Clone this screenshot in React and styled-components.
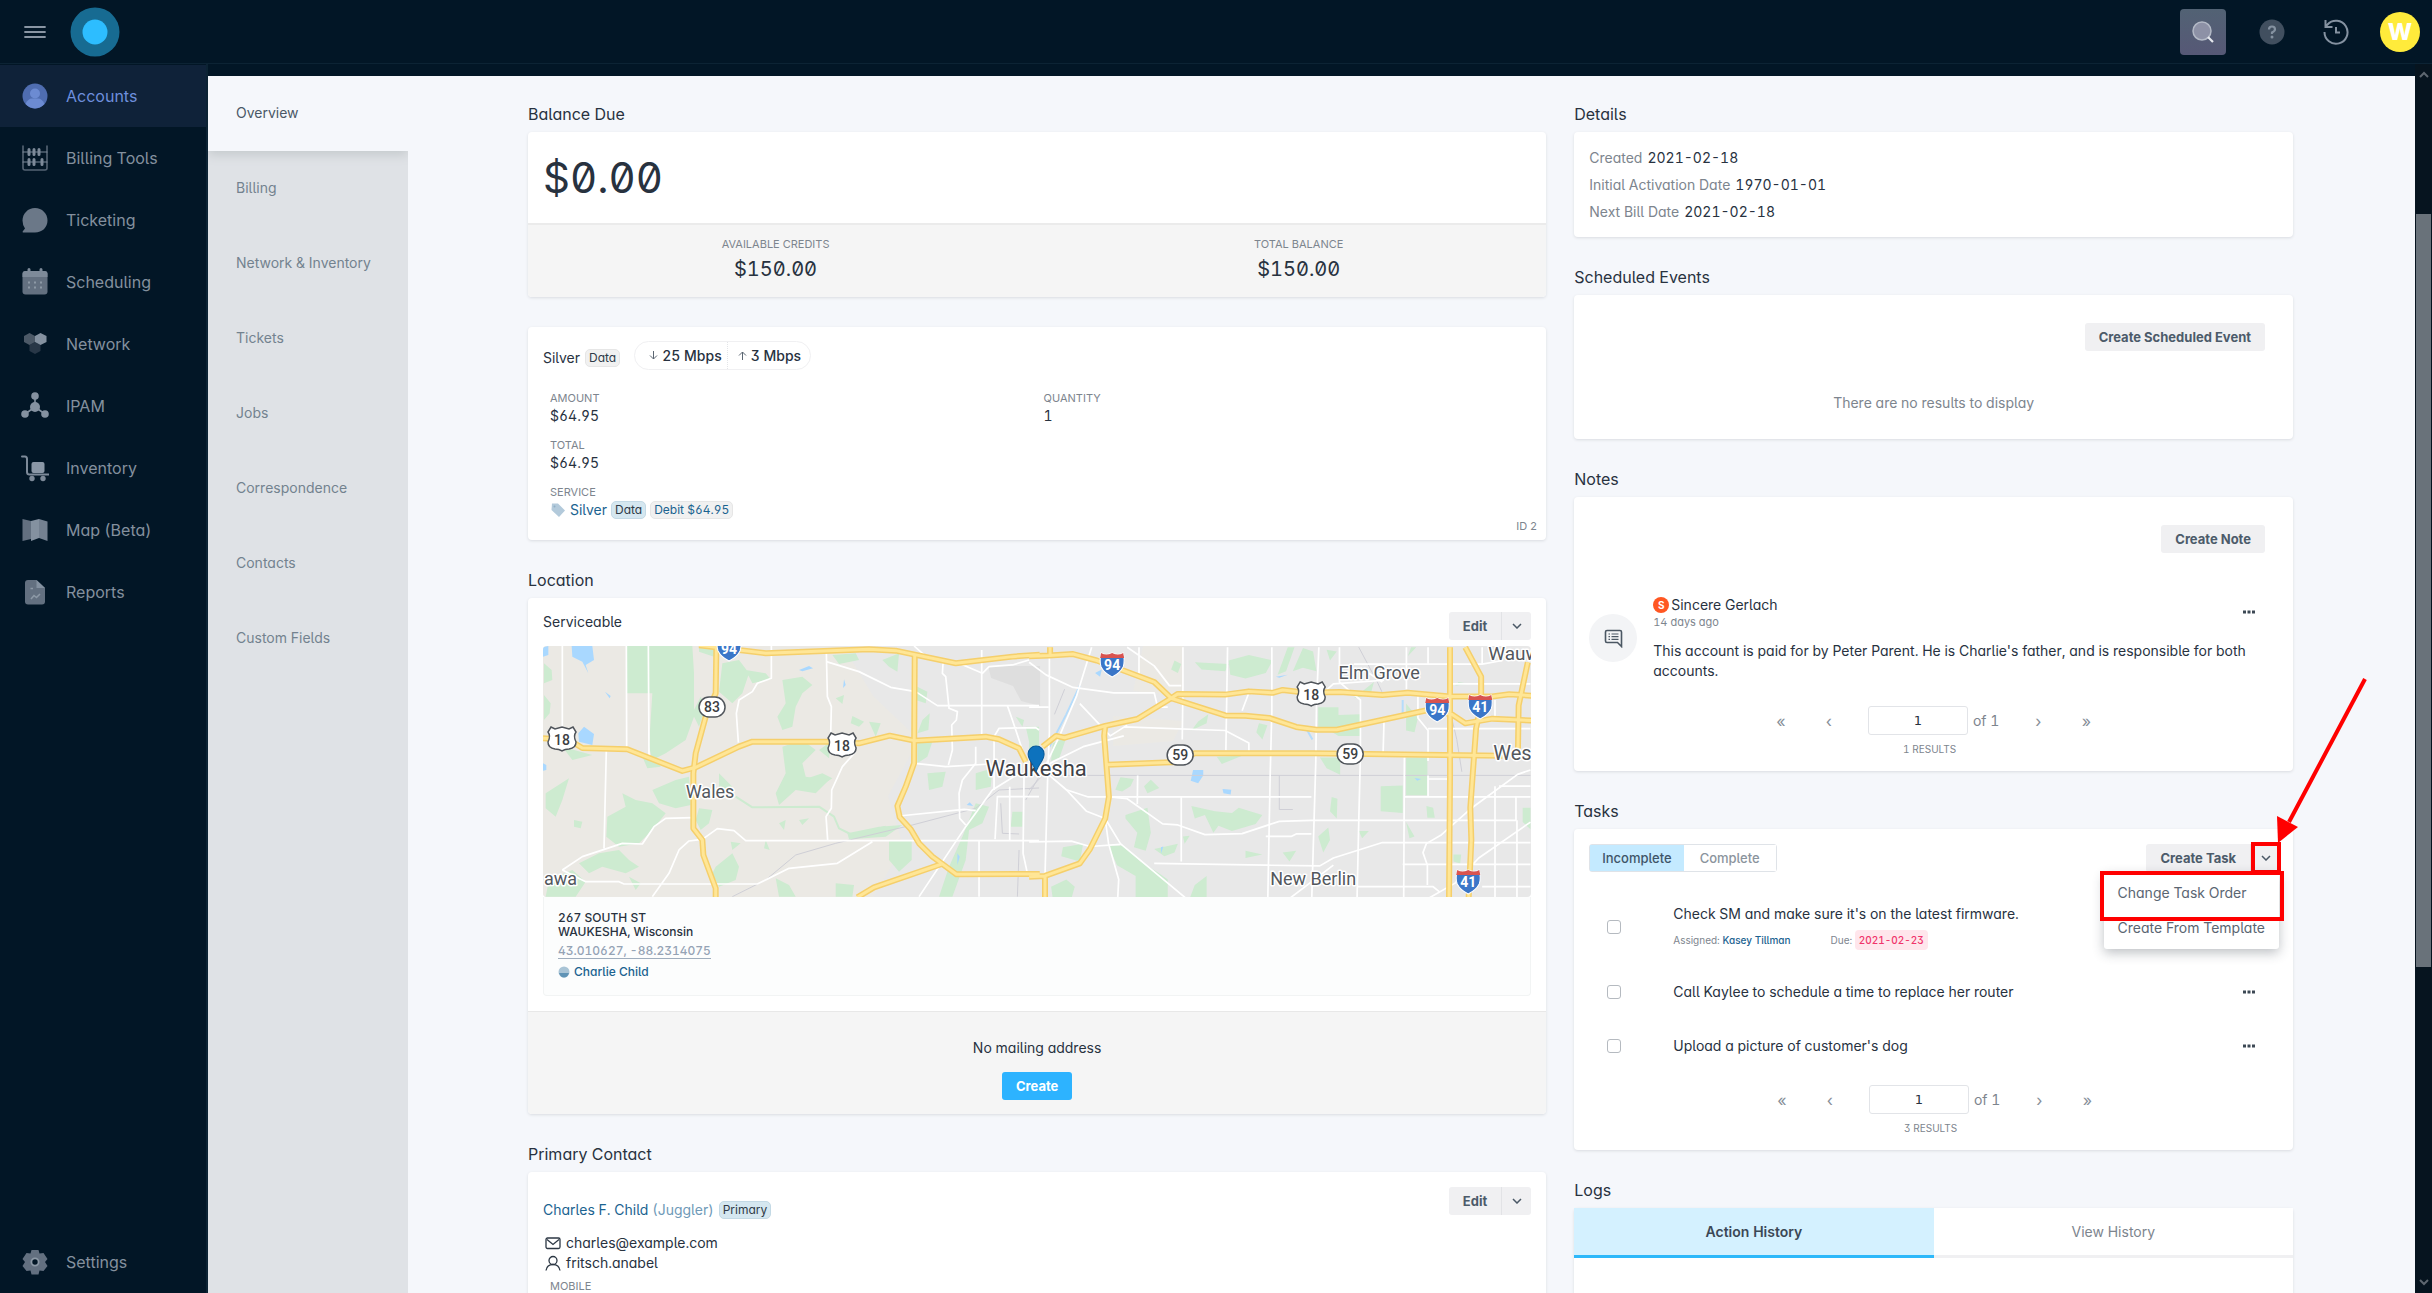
import React, { useState } from 'react';
import styled, { createGlobalStyle } from 'styled-components';

const menu = [
  { label: 'Accounts', icon: 'accounts', active: true },
  { label: 'Billing Tools', icon: 'billing' },
  { label: 'Ticketing', icon: 'ticketing' },
  { label: 'Scheduling', icon: 'scheduling' },
  { label: 'Network', icon: 'network' },
  { label: 'IPAM', icon: 'ipam' },
  { label: 'Inventory', icon: 'inventory' },
  { label: 'Map (Beta)', icon: 'map' },
  { label: 'Reports', icon: 'reports' },
];

const tabs = ['Overview', 'Billing', 'Network & Inventory', 'Tickets', 'Jobs', 'Correspondence', 'Contacts', 'Custom Fields'];

const details = [
  { label: 'Created', value: '2021-02-18' },
  { label: 'Initial Activation Date', value: '1970-01-01' },
  { label: 'Next Bill Date', value: '2021-02-18' },
];

const tasks = [
  { id: 1, title: "Check SM and make sure it's on the latest firmware.", assigned: 'Kasey Tillman', due: '2021-02-23' },
  { id: 2, title: 'Call Kaylee to schedule a time to replace her router' },
  { id: 3, title: "Upload a picture of customer's dog" },
];

const icons = {
  accounts: (
    <>
      <circle cx="14" cy="14" r="12.5" fill="#4f6db0" />
      <circle cx="14" cy="11.5" r="5" fill="#6c8bd2" />
      <path d="M4.5 22 Q7 16.5 11 16.5 H17 Q21 16.5 23.5 22 A12.5 12.5 0 0 1 4.5 22Z" fill="#6c8bd2" />
    </>
  ),
  billing: (
    <g fill="none" stroke="#7d8a99" strokeLinecap="round">
      <path d="M2 2 V24 Q2 26 4 26 H24 Q26 26 26 24 V2" strokeWidth="1.6" stroke="#566474" />
      <path d="M2 8 H26 M2 18 H26" strokeWidth="1.2" />
      <path d="M8 5.5 V10.5 M13 5.5 V10.5 M18 5.5 V10.5 M8 15.5 V20.5 M13 15.5 V20.5 M21 15.5 V20.5" strokeWidth="3" />
    </g>
  ),
  ticketing: <path d="M14 2 C21 2 26.500 7.500 26.500 14.500 C26.500 21.500 21 26.500 14 26.500 H2 Q1 26 2 25 L4 22.500 Q1.500 19 1.500 14.500 C1.500 7.500 7 2 14 2Z" fill="#6b7888" />,
  scheduling: (
    <>
      <rect x="1.500" y="3" width="25" height="23.500" rx="3" fill="#637080" />
      <path d="M1.500 9 V6 Q1.500 3 4.500 3 H23.500 Q26.500 3 26.500 6 V9Z" fill="#7d8a99" />
      <path d="M8 1.500 V4.500 M20 1.500 V4.500" stroke="#7d8a99" strokeWidth="3" strokeLinecap="round" />
      <path d="M7 14.500h2M13 14.500h2M19 14.500h2M7 19.500h2M13 19.500h2M19 19.500h2" stroke="#8d99a6" strokeWidth="2" />
    </>
  ),
  network: (
    <>
      <path d="M14 12 L19.500 15 V21 L14 24 L8.500 21 V15Z" fill="#283747" />
      <path d="M8.500 3 L14 6 V12 L8.500 15 L3 12 V6Z" fill="#4c5967" />
      <path d="M19.500 3 L25.500 6 V12 L19.500 15 L14 12 V6Z" fill="#8491a0" />
    </>
  ),
  ipam: (
    <g fill="#8491a0">
      <path d="M14 5 V15 L4 22 M14 15 L24 22" stroke="#8491a0" strokeWidth="1.600" fill="none" />
      <circle cx="14" cy="4" r="3.800" />
      <circle cx="14" cy="15" r="5" />
      <circle cx="4" cy="22" r="3.800" />
      <circle cx="24" cy="22" r="3.800" />
    </g>
  ),
  inventory: (
    <>
      <path d="M1 2.500 H4 Q6 2.500 6 5 V18 Q6 20.500 8.500 20.500 H27.500" fill="none" stroke="#7d8a99" strokeWidth="2" strokeLinecap="round" />
      <rect x="10.500" y="8" width="13" height="11" rx="2" fill="#8a97a6" />
      <circle cx="11" cy="24.500" r="2.700" fill="#7d8a99" />
      <circle cx="22" cy="24.500" r="2.700" fill="#7d8a99" />
    </>
  ),
  map: (
    <>
      <path d="M1.500 3 L10 5 V23 L1.500 25Z" fill="#637080" />
      <path d="M10 5 L18 3 V22 L10 25Z" fill="#8491a0" />
      <path d="M18 3 L26.500 5.500 V25 L18 22Z" fill="#748191" />
    </>
  ),
  reports: (
    <>
      <path d="M7 2 H15.500 L24 10 V23.500 Q24 26.500 21 26.500 H7 Q4 26.500 4 23.500 V5 Q4 2 7 2Z" fill="#637080" />
      <path d="M15.500 2 L24 10 H15.500Z" fill="#8491a0" />
      <path d="M9.500 10.500 H12 M10 21 L13 17.500 L15.500 19.500 L19 16" fill="none" stroke="#8d99a6" strokeWidth="1.600" />
    </>
  ),
  settings: (
    <>
      <path d="M10.500 2 H17.500 L18.500 5.500 L22.500 5 L26.500 11 L24 14 L26.500 18 L22.500 23 L18.500 22.500 L17.500 26.500 H10.500 L9.500 22.500 L5.500 23 L1.500 18 L4 14 L1.500 11 L5.500 5 L9.500 5.500Z" fill="#637080" strokeLinejoin="round" />
      <circle cx="14" cy="14" r="3.600" fill="#021626" stroke="#8d99a6" strokeWidth="1.800" />
    </>
  ),
};

const Icon = ({ name }) => (
  <svg width="28" height="28" viewBox="0 0 28 28" aria-hidden="true">{icons[name]}</svg>
);

const Chevron = () => (
  <svg width="10" height="6" viewBox="0 0 10 6" aria-hidden="true">
    <path d="M1 1 L5 5 L9 1" fill="none" stroke="#4a5866" strokeWidth="1.500" />
  </svg>
);

const Interstate = ({ x, y, children }) => (
  <g transform={`translate(${x} ${y})`}>
    <path d="M-11 -11 Q-6 -8 0 -11 Q6 -8 11 -11 Q13 -3 11 3 Q8 9 0 13 Q-8 9 -11 3 Q-13 -3 -11 -11Z" fill="#3a76c8" stroke="#ffffff" strokeWidth="1" />
    <path d="M-11 -11 Q-6 -8 0 -11 Q6 -8 11 -11 L12 -6 H-12Z" fill="#d9534f" />
    <text y="6" textAnchor="middle" fontSize="14" fontWeight="700" fill="#ffffff">{children}</text>
  </g>
);

const UsRoute = ({ x, y, children }) => (
  <g transform={`translate(${x} ${y})`}>
    <path d="M-11 -12 L-7 -10 L0 -12 L7 -10 L11 -12 L14 -7 Q11 -3 14 3 Q14 9 7 10 Q3 10 0 12 Q-3 10 -7 10 Q-14 9 -14 3 Q-11 -3 -14 -7Z" fill="#ffffff" stroke="#50555b" strokeWidth="1.500" />
    <text y="6" textAnchor="middle" fontSize="14" fontWeight="500" fill="#3c4043">{children}</text>
  </g>
);

const StateRoute = ({ x, y, children }) => (
  <g transform={`translate(${x} ${y})`}>
    <rect x="-13" y="-10" width="26" height="20" rx="10" fill="#ffffff" stroke="#50555b" strokeWidth="1.500" />
    <text y="5" textAnchor="middle" fontSize="14" fontWeight="500" fill="#3c4043">{children}</text>
  </g>
);

// the western and eastern halves are plotted on their own grids
const WEST = 'translate(-24 -86) scale(.3333)';
const EAST = 'translate(486 -86) scale(.338 .359)';

const westParks = [
  'M322 258 H520 L525 340 V470 L500 540 L440 580 L400 600 L390 560 L400 400 H322Z',
  'M75 310 L98 330 L100 360 L75 370Z M75 405 L95 430 L92 460 L75 480Z',
  'M540 258 L590 258 L585 290 L540 275Z M545 410 L520 460 L540 500 L560 440Z',
  'M610 310 L660 300 L690 340 L670 400 L640 430 L600 395Z M680 330 L740 340 L755 358 L700 370Z',
  'M790 360 L850 350 L880 375 L850 400 L830 440 L820 500 L790 510 L775 470 L800 430Z',
  'M940 285 L1010 280 L1020 300 L960 312Z M1090 300 L1140 280 L1135 335 L1110 320Z',
  'M790 560 L850 540 L890 570 L850 610 L860 650 L930 660 L890 700 L830 690 L780 735 L770 700 L800 640Z',
  'M850 660 L910 640 L940 655 L900 680Z M900 570 L935 545 L930 595Z',
  'M1000 468 L1035 485 L1020 500 L995 490Z M950 415 L975 405 L970 432Z M1050 485 L1085 490 L1070 530Z',
  'M80 700 L150 655 L130 720 L110 770 L80 745Z M165 780 L190 785 L185 805 L165 800Z',
  'M265 770 L320 740 L310 700 L350 720 L400 730 L440 760 L400 810 L360 850 L300 860 L262 830Z',
  'M400 690 L470 660 L510 650 L515 735 L470 745 L420 730Z M540 745 L580 750 L570 790 L545 810 L530 780Z',
  'M180 910 L240 880 L300 870 L330 900 L360 920 L320 940 L250 920 L210 940Z',
  'M90 960 L160 930 L200 965 L170 1010 H80Z M330 950 L365 970 L350 990Z',
  'M590 920 L640 880 L660 920 L650 960 L600 980 L580 940Z M740 840 L752 870 L735 865Z',
  'M1110 843 H1178 V900 L1140 935 L1110 900Z M950 970 L1005 975 L1000 1010 H950Z M770 955 L810 975 L830 1010 H780Z',
  'M1195 380 L1225 395 L1220 430 L1190 420Z M1210 480 L1232 460 L1228 510 L1195 520Z',
  'M1195 550 L1240 545 L1225 590 L1195 610Z M1225 640 L1280 635 L1270 680 L1230 690Z',
  'M1370 640 L1420 625 L1415 680 L1370 690Z M1370 730 L1410 740 L1390 790 L1350 810 L1340 900 L1300 1010 H1260 L1290 920 L1330 830Z',
  'M1080 800 L1150 795 L1100 830 L990 838 L985 820Z M1520 500 H1560 V560 L1530 545Z M1480 755 H1510 V800 H1475Z',
  'M1490 470 L1515 480 L1510 500Z M130 560 L220 585 L160 600Z M370 590 L410 585 L425 620 L385 625Z',
  'M780 790 L800 780 L795 810Z M840 780 L870 775 L850 795Z M600 640 L640 680 L600 690Z M635 845 L665 850 L640 870Z',
];

const eastParks = [
  'M590 280 L650 265 L720 280 L700 315 L640 330 L595 320Z M490 285 L590 290 L580 310 L510 305Z',
  'M810 245 L840 255 L850 310 L810 300 L780 310Z M735 320 L765 243 L785 243 L760 310Z M430 280 L450 290 L440 315 L420 305Z',
  'M855 410 H915 V432 L980 430 V490 H915 L880 470 L855 465Z M860 550 H920 V598 L880 580Z',
  'M1115 550 H1178 V655 H1115Z M1040 630 L1105 628 V705 L1040 700Z M1115 400 L1150 440 L1140 480 L1115 475Z',
  'M480 685 L550 700 L600 705 L620 690 L690 710 L670 735 L600 755 L560 740 L545 760 L520 710 L490 720Z',
  'M285 710 L350 690 L360 760 L345 810 L310 800 L320 760 L285 720Z M370 805 L440 790 L430 815 L400 825Z',
  'M235 795 H280 L330 840 L380 870 L410 890 L410 943 H315 V880 L260 850Z M65 910 L110 890 L135 910 L125 943 H70Z',
  'M255 640 L270 605 L310 610 L300 630 L275 645Z M340 630 L360 612 L385 635 L350 650Z M455 770 L475 768 L460 790Z',
  'M640 810 L690 820 L640 830Z M750 815 L790 810 L770 840Z M855 770 L885 745 L890 780 L870 815Z M895 660 L912 665 L910 720 L890 700Z',
  'M490 905 L525 880 L525 943 H475Z M1175 685 L1195 690 L1200 718 H1178Z M975 755 L1005 755 L985 775Z M1115 730 L1140 770 L1125 775Z',
  'M0 470 L30 480 L20 520 L0 530Z M70 510 L110 495 L90 550 L65 560Z M500 450 L530 430 L525 455 L480 475Z M555 548 L630 545 L570 568Z',
  'M100 800 L160 790 L150 840 L95 825Z M680 455 L705 460 L690 500 L672 480Z M960 385 L1020 340 L1010 375Z M1130 243 H1145 L1120 268Z',
  'M1460 690 H1483 V750 L1460 730Z M1255 820 L1278 820 L1275 845 L1255 840Z M1270 340 L1300 345 L1260 350Z M880 250 L910 255 L890 280Z',
];

const westRoads = [
  'M130 258 V500 M322 258 L323 568 M388 258 L390 590 M262 570 L255 865 M130 930 L190 890 L310 850 L370 852 L405 800 L440 775 L520 773',
  'M130 930 L200 965 L300 965 L315 972 H715 L810 925 L955 910 L1060 845 M400 1010 L450 940 L480 870 L510 843 L550 838 L595 806 L645 812 L680 842 H1560',
  'M757 258 V355 L715 370 L700 395 L660 420 L652 460 L658 548 M922 280 L925 410 L937 440 L935 520 M1010 575 L970 620 L938 690 L937 745 L921 770 L926 842',
  'M922 305 L1020 335 L1115 382 L1190 395 L1255 437 H1560 M1272 310 L1270 340 L1280 350 L1290 445 L1315 455 L1312 480 L1298 495 L1300 570 L1288 615',
  'M1388 270 V530 M1465 437 L1480 480 L1510 570 M1188 610 L1280 620 L1415 612 M1425 690 V530 L1440 505 L1550 503 L1560 510',
  'M1500 640 L1420 690 L1340 800 L1200 1010 M1370 560 V610 L1330 660 L1320 700 L1322 775 L1340 795 M1380 843 V1010 M1428 838 L1435 710 H1560 M1472 680 V840 M1515 640 L1512 880 L1525 940',
  'M1140 768 L1335 748 L1370 752 M1185 258 L1215 285 L1320 310 L1390 340 L1410 320 L1480 315 L1530 300',
];

const eastRoads = [
  'M0 285 L50 320 L130 355 L250 370 H370 L380 410 H410 M60 243 V480 L55 600 L47 880 M185 243 L140 380 L90 490 L40 590',
  'M290 243 L370 295 L415 350 H450 M325 243 V330 M455 243 V350 L453 500 M587 243 L582 530 M718 243 V420 L713 600 L706 943',
  'M857 243 L850 400 L848 560 L836 943 M918 243 V340 L980 390 V540 L975 730 L970 943 M1050 440 L1047 540 M1116 243 V360 M1110 550 L1108 940 M1180 243 V290',
  'M960 290 H1340 L1400 280 M1340 243 V290 M280 465 L580 475 L650 510 V535 M150 400 L240 490 L290 460 M60 600 L110 640 L175 660 H835',
  'M110 640 L170 700 L225 720 L270 790 L465 943 M225 720 L235 790 L265 890 L262 943 M240 660 L290 665 L395 735 L440 738 L520 765 L630 762 L740 728 L835 725 H1440 V660',
  'M1110 660 H1483 M1180 600 V660 M1180 610 H1240 M1180 470 H1483 M1150 380 V440 L1180 475 V560 M321 600 L320 680 M450 660 V840 M370 845 L700 850 L860 852 L900 830 L1045 787 H1483',
  'M700 770 H775 L790 763 H835 M1045 340 L980 300 M1180 943 L1260 900 L1330 830 L1483 730 M1483 585 L1445 597 L1310 690 L1220 765 L1175 790 L1165 815 L1178 850 V905',
  'M1105 848 H1483 M970 910 H1195 L1215 925 M1340 910 H1483 M1378 630 V943 M1443 725 V943 M1378 390 V440 M0 785 L125 783 L180 798 L270 792 M0 410 H58 M770 943 L900 850 M630 420 L650 370 L660 372',
  'M0 600 L75 560 L160 520 L280 490 M1390 630 H1483 M1250 345 H1483 M870 370 L900 345 L1050 335',
];

const westHighways = [
  'M540 256 L740 280 L1050 268 L1130 272 L1310 310 L1480 290 L1562 284',
  'M592 262 L590 400 L560 470 L530 580 L523 640 V805 L550 840 L553 885 L590 985 V1012',
  'M72 535 L150 540 L190 564 L325 568 L490 633 L530 622 L660 560 L700 545 H925 L1020 550 L1112 527 L1185 542 L1400 530 L1440 538 L1500 565 L1520 605',
  'M1187 285 L1185 610 L1160 680 L1135 738 L1142 772 L1175 808 L1200 850 L1240 890 L1312 943 L1562 942 M1268 912 L1065 982 L1015 1012',
];

const eastHighways = [
  'M0 268 L60 266 L130 262 L200 280 L370 340 L420 385 L580 433 L640 434 L710 440 L790 465 L850 473 L910 473 L1180 418 L1250 430 L1290 455 L1370 442 L1485 447',
  'M40 520 L80 490 L105 495 L225 462 L320 443 L420 385 L440 373 L580 375 L650 366 L720 370 L750 362 L820 370 L920 368 L1045 376 L1120 370 L1245 380 H1370 L1420 374 L1485 378',
  'M225 462 L222 490 L236 660 L225 720 L180 805 L150 845 L47 880 L0 882 M47 880 V943 M230 570 L440 563 L490 538 L840 538 L1110 542 L1400 545',
  'M1245 243 V600 L1242 943 M1290 243 L1337 325 V400 L1322 470 L1305 690 L1308 780 L1300 943 M1475 285 L1448 405 L1446 525 M62 243 V266',
];

const Paths = ({ list, ...rest }) => (
  <g fill="none" strokeLinejoin="round" {...rest}>
    {list.map((d) => <path key={d} d={d} vectorEffect="non-scaling-stroke" />)}
  </g>
);

const LocationMap = () => (
  <MapDrawing viewBox="0 0 988 251" preserveAspectRatio="xMidYMid slice" role="img" aria-label="Map of Waukesha">
    <rect width="988" height="251" fill="#e8e8e8" />
    <path d="M0 0 H300 L330 50 L372 90 V100 L345 150 L360 200 L330 251 H0Z M600 0 H640 V50 L590 45Z M570 70 L640 75 L630 95 L570 100Z" fill="#ebe9e4" />
    <path d="M445 20 H497 V60 L478 55 L470 40 L448 32Z" fill="#dedede" />
    <g fill="#cdebd0">
      <g transform={WEST}>{westParks.map((d) => <path key={d} d={d} />)}</g>
      <g transform={EAST}>{eastParks.map((d) => <path key={d} d={d} />)}</g>
    </g>
    <g transform={WEST} fill="#a9d8ff">
      <path d="M158 258 H220 L225 300 L200 315 L208 340 L190 305 L160 290Z M72 262 L88 258 V285 L72 290Z M195 500 L225 522 L220 555 L180 545 L178 520Z M840 330 L870 318 L882 325 L850 334Z M258 395 L275 408 L272 415Z M975 358 L980 375 L972 384Z M1315 880 L1322 890 L1315 915Z M1343 735 L1352 727 L1362 738Z M72 610 L82 615 V630 L72 632Z" />
    </g>
    <g transform={EAST} fill="#a9d8ff">
      <path d="M485 585 H515 V600 L500 622 L478 615Z M572 638 L598 640 L596 653 L575 650Z M195 315 L215 305 L210 325Z M730 325 L765 320 L740 328Z M1140 607 L1160 610 L1148 615Z M390 800 L397 798 L390 818Z" />
    </g>
    <Paths list={['M640 1010 L740 960 L830 885 L950 850 L1180 795 L1370 745 L1440 690 L1560 684', 'M1500 870 L1495 1010 M1560 650 L1520 720 M1445 730 L1450 820 L1500 822']} transform={WEST} stroke="#cfcfd6" strokeWidth="1" />
    <Paths list={['M0 640 L40 600 H1483 M740 600 V695 H780 M975 243 L1030 340 L1050 380 M1240 400 L1265 500 L1280 590 M75 430 L105 360']} transform={EAST} stroke="#cfcfd6" strokeWidth="1" />
    <Paths list={['M650 710 L700 742 L900 740 L945 770 L960 805 L1000 825 L1100 800']} transform={WEST} stroke="#cdebd0" strokeWidth="2" />
    <Paths list={['M150 350 L110 430 L60 520 M820 470 L838 500 M1105 390 V440']} transform={EAST} stroke="#b5dcfb" strokeWidth="2" />
    <Paths list={westRoads} transform={WEST} stroke="#ffffff" strokeWidth="1.700" />
    <Paths list={eastRoads} transform={EAST} stroke="#ffffff" strokeWidth="1.700" />
    <Paths list={westHighways} transform={WEST} stroke="#f5cf6b" strokeWidth="6" />
    <Paths list={eastHighways} transform={EAST} stroke="#f5cf6b" strokeWidth="6" />
    <Paths list={westHighways} transform={WEST} stroke="#ffe696" strokeWidth="3" />
    <Paths list={eastHighways} transform={EAST} stroke="#ffe696" strokeWidth="3" />
    <Interstate x={186} y={2}>94</Interstate>
    <Interstate x={569} y={18}>94</Interstate>
    <Interstate x={894} y={63}>94</Interstate>
    <Interstate x={937} y={60}>41</Interstate>
    <Interstate x={925} y={235}>41</Interstate>
    <UsRoute x={19} y={93}>18</UsRoute>
    <UsRoute x={299} y={99}>18</UsRoute>
    <UsRoute x={768} y={48}>18</UsRoute>
    <StateRoute x={169} y={61}>83</StateRoute>
    <StateRoute x={637} y={109}>59</StateRoute>
    <StateRoute x={807} y={108}>59</StateRoute>
    <g fill="#53575d" fontSize="18" stroke="#ffffff" strokeWidth="3" paintOrder="stroke" strokeLinejoin="round">
      <text x="167" y="152" textAnchor="middle">Wales</text>
      <text x="836" y="33" textAnchor="middle">Elm Grove</text>
      <text x="770" y="239" textAnchor="middle">New Berlin</text>
      <text x="1" y="239">awa</text>
      <text x="945" y="14" fontSize="19">Wauw</text>
      <text x="950" y="114" fontSize="20">Wes</text>
      <text x="493" y="130" textAnchor="middle" fontSize="22" fill="#3f4247">Waukesha</text>
    </g>
    <path d="M493 126 C491 118 485 115 485 108 A8 8 0 0 1 501 108 C501 115 495 118 493 126Z" fill="#0d72bd" stroke="#075a99" strokeWidth="1" />
  </MapDrawing>
);

const SplitButton = ({ label, children, ...rest }) => (
  <Split>
    <SplitMain>{label}</SplitMain>
    <SplitCaret aria-label={`${label} options`} {...rest}><Chevron /></SplitCaret>
    {children}
  </Split>
);

const Pager = ({ id, results }) => (
  <>
    <PagerRow>
      <PagerButton aria-label="First page">«</PagerButton>
      <PagerButton aria-label="Previous page">‹</PagerButton>
      <PageField>
        <PageInput id={id} aria-label="Page" defaultValue="1" />
        <label htmlFor={id}>of 1</label>
      </PageField>
      <PagerButton aria-label="Next page">›</PagerButton>
      <PagerButton aria-label="Last page">»</PagerButton>
    </PagerRow>
    <Results>{results} RESULTS</Results>
  </>
);

const Dots = () => (
  <DotsButton aria-label="More actions">
    <svg width="12" height="4" viewBox="0 0 12 4">
      <path d="M0 .500h3v3h-3z M4.500 .500h3v3h-3z M9 .500h3v3h-3z" fill="#3c4854" />
    </svg>
  </DotsButton>
);

function App() {
  const [filter, setFilter] = useState('Incomplete');
  const [menuOpen, setMenuOpen] = useState(true);

  return (
    <Page>
      <GlobalStyle />
      <TopBar>
        <BarButton aria-label="Menu">
          <svg width="22" height="14" viewBox="0 0 22 14"><path d="M1 2 H21 M1 7 H21 M1 12 H21" stroke="#8995a3" strokeWidth="1.800" strokeLinecap="round" /></svg>
        </BarButton>
        <Logo href="#" aria-label="Home">
          <svg width="50" height="50" viewBox="0 0 50 50"><circle cx="25" cy="25" r="24.500" fill="#176b92" /><circle cx="25" cy="25" r="12.500" fill="#2dbdff" /></svg>
        </Logo>
        <SearchButton aria-label="Search">
          <svg width="22" height="22" viewBox="0 0 22 22"><circle cx="10" cy="10" r="9" fill="#8d91a6" stroke="#b3b9c6" strokeWidth="1.500" /><path d="M16 16 L21 21" stroke="#e6e8ee" strokeWidth="2.200" /></svg>
        </SearchButton>
        <BarTool aria-label="Help">
          <svg width="26" height="26" viewBox="0 0 26 26">
            <circle cx="13" cy="13" r="12.500" fill="#414f5f" />
            <path d="M10 10.500 Q10 7.500 13 7.500 Q16 7.500 16 10.200 Q16 12 13 13.500 V15" fill="none" stroke="#8592a1" strokeWidth="2.200" />
            <circle cx="13" cy="18" r="1.500" fill="#8592a1" />
          </svg>
        </BarTool>
        <BarTool aria-label="History">
          <svg width="26" height="26" viewBox="0 0 26 26" fill="none" stroke="#8592a1" strokeWidth="2">
            <path d="M1.500 13 A11.500 11.500 0 1 0 4.500 5.500 L2.500 7.500 M2.500 1 V8 H9.500 M13 8 V13.500 H17" />
          </svg>
        </BarTool>
        <BarTool aria-label="Profile"><Avatar>W</Avatar></BarTool>
      </TopBar>

      <Body>
        <Sidebar>
          {menu.map((item) => (
            <MenuLink key={item.label} href="#" $active={item.active}>
              <Icon name={item.icon} />
              {item.label}
            </MenuLink>
          ))}
          <SettingsLink href="#"><Icon name="settings" />Settings</SettingsLink>
        </Sidebar>

        <Workspace>
          <SubNav>
            {tabs.map((tab, i) => <SubLink key={tab} href="#" $active={i === 0}>{tab}</SubLink>)}
          </SubNav>

          <Content>
            <Column>
              <section>
                <Title>Balance Due</Title>
                <Card>
                  <Balance>$0.00</Balance>
                  <Totals>
                    <Total><Caption>AVAILABLE CREDITS</Caption><TotalValue>$150.00</TotalValue></Total>
                    <Total><Caption>TOTAL BALANCE</Caption><TotalValue>$150.00</TotalValue></Total>
                  </Totals>
                </Card>
              </section>

              <ServiceCard>
                <ServiceHead>
                  <ServiceName>Silver <Badge>Data</Badge></ServiceName>
                  <Speeds>
                    <Speed>
                      <svg width="9" height="9" viewBox="0 0 9 9"><path d="M4.500 0 V8 M1 4.500 L4.500 8 L8 4.500" fill="none" stroke="#5b6672" /></svg>
                      25 Mbps
                    </Speed>
                    <Speed>
                      <svg width="9" height="9" viewBox="0 0 9 9"><path d="M4.500 9 V1 M1 4.500 L4.500 1 L8 4.500" fill="none" stroke="#5b6672" /></svg>
                      3 Mbps
                    </Speed>
                  </Speeds>
                </ServiceHead>
                <Fields>
                  <Field><Caption>AMOUNT</Caption><span>$64.95</span></Field>
                  <Field><Caption>QUANTITY</Caption><span>1</span></Field>
                  <Field $wide><Caption>TOTAL</Caption><span>$64.95</span></Field>
                  <Field $wide>
                    <Caption>SERVICE</Caption>
                    <ServiceLine>
                      <svg width="16" height="16" viewBox="0 0 16 16"><path d="M2 1.500 H8 L15 8.500 L9 15 L1.500 8Z" fill="#b3cadb" /><circle cx="4.500" cy="4.500" r="1" fill="#8eafc6" /></svg>
                      <TextLink href="#">Silver</TextLink>
                      <Badge $tone="blue">Data</Badge>
                      <Badge $link>Debit $64.95</Badge>
                    </ServiceLine>
                  </Field>
                </Fields>
                <ServiceId>ID 2</ServiceId>
              </ServiceCard>

              <section>
                <Title>Location</Title>
                <Card>
                  <LocationBody>
                    <LocationHead>
                      <span>Serviceable</span>
                      <SplitButton label="Edit" />
                    </LocationHead>
                    <LocationMap />
                    <Address>
                      <span>267 SOUTH ST</span>
                      <span>WAUKESHA, Wisconsin</span>
                      <Coords href="#">43.010627, -88.2314075</Coords>
                      <Person href="#">
                        <svg width="12" height="12" viewBox="0 0 12 12"><circle cx="6" cy="6" r="5.500" fill="#a9c4d6" /><path d="M1 7 H11 Q9.500 11.500 6 11.500 Q2.500 11.500 1 7Z" fill="#5f93b5" /></svg>
                        Charlie Child
                      </Person>
                    </Address>
                  </LocationBody>
                  <Mailing>
                    No mailing address
                    <CreateButton>Create</CreateButton>
                  </Mailing>
                </Card>
              </section>

              <section>
                <Title>Primary Contact</Title>
                <ContactCard>
                  <ContactHead>
                    <ContactName>
                      <TextLink href="#">Charles F. Child <Role>(Juggler)</Role></TextLink>
                      <Badge $tone="blue">Primary</Badge>
                    </ContactName>
                    <SplitButton label="Edit" />
                  </ContactHead>
                  <ContactLine>
                    <svg width="16" height="16" viewBox="0 0 16 16" fill="none" stroke="#2c3744" strokeWidth="1.300"><rect x="1" y="3" width="14" height="10.500" rx="1.500" /><path d="M2 4.500 L8 9.500 L14 4.500" /></svg>
                    charles@example.com
                  </ContactLine>
                  <ContactLine>
                    <svg width="16" height="16" viewBox="0 0 16 16" fill="none" stroke="#2c3744" strokeWidth="1.300"><circle cx="8" cy="5.500" r="4" /><path d="M1 15.500 Q2 9.500 8 9.500 Q14 9.500 15 15.500" /></svg>
                    fritsch.anabel
                  </ContactLine>
                  <Mobile>MOBILE</Mobile>
                </ContactCard>
              </section>
            </Column>

            <Column>
              <section>
                <Title>Details</Title>
                <DetailCard>
                  {details.map((row) => (
                    <DetailRow key={row.label}><dt>{row.label}</dt><dd>{row.value}</dd></DetailRow>
                  ))}
                </DetailCard>
              </section>

              <section>
                <Title>Scheduled Events</Title>
                <PanelCard>
                  <GreyButton>Create Scheduled Event</GreyButton>
                  <Empty>There are no results to display</Empty>
                </PanelCard>
              </section>

              <section>
                <Title>Notes</Title>
                <PanelCard>
                  <GreyButton>Create Note</GreyButton>
                  <Note>
                    <NoteIcon>
                      <svg width="19" height="19" viewBox="0 0 19 19" fill="none" stroke="#4b5763" strokeWidth="1.600">
                        <path d="M17.500 17.500 L13.500 13.500 H3 Q1.500 13.500 1.500 12 V3 Q1.500 1.500 3 1.500 H16 Q17.500 1.500 17.500 3Z" />
                        <path d="M4.500 5h1.500M7.500 5h7M4.500 7.700h1.500M7.500 7.700h7M4.500 10.400h1.500M7.500 10.400h7" strokeWidth="1.200" />
                      </svg>
                    </NoteIcon>
                    <NoteBody>
                      <NoteHead>
                        <div>
                          <NoteAuthor><SmallAvatar>S</SmallAvatar>Sincere Gerlach</NoteAuthor>
                          <NoteTime>14 days ago</NoteTime>
                        </div>
                        <Dots />
                      </NoteHead>
                      <NoteText>This account is paid for by Peter Parent. He is Charlie's father, and is responsible for both accounts.</NoteText>
                    </NoteBody>
                  </Note>
                  <Pager id="notes-page" results={1} />
                </PanelCard>
              </section>

              <section>
                <Title>Tasks</Title>
                <TaskCard>
                  <TaskHead>
                    <Toggle>
                      {['Incomplete', 'Complete'].map((name) => (
                        <ToggleButton key={name} $on={filter === name} onClick={() => setFilter(name)}>{name}</ToggleButton>
                      ))}
                    </Toggle>
                    <SplitButton label="Create Task" onClick={() => setMenuOpen(!menuOpen)}>
                      <CaretFrame />
                      {menuOpen && (
                        <DropMenu>
                          <DropItem>Change Task Order</DropItem>
                          <DropItem>Create From Template</DropItem>
                          <ItemFrame />
                        </DropMenu>
                      )}
                      <Arrow width="92" height="168" viewBox="0 0 92 168">
                        <path d="M88 3 L12 146" stroke="#ff0000" strokeWidth="4" />
                        <path d="M0 140 L21 151 L1 167Z" fill="#ff0000" />
                      </Arrow>
                    </SplitButton>
                  </TaskHead>
                  {tasks.map((task) => (
                    <TaskRow key={task.id}>
                      <TaskCheck type="checkbox" id={`task-${task.id}`} />
                      <TaskBody>
                        <label htmlFor={`task-${task.id}`}>{task.title}</label>
                        {task.assigned && (
                          <TaskMeta>
                            <span>Assigned: <TextLink href="#">{task.assigned}</TextLink></span>
                            <span>Due: <Due>{task.due}</Due></span>
                          </TaskMeta>
                        )}
                      </TaskBody>
                      {!task.assigned && <Dots />}
                    </TaskRow>
                  ))}
                  <TaskPager><Pager id="tasks-page" results={3} /></TaskPager>
                </TaskCard>
              </section>

              <section>
                <Title>Logs</Title>
                <LogCard>
                  <LogTab $on>Action History</LogTab>
                  <LogTab>View History</LogTab>
                </LogCard>
              </section>
            </Column>
          </Content>

          <ScrollTrack>
            <svg width="10" height="7" viewBox="0 0 10 7"><path d="M1 6 L5 2 L9 6" fill="none" stroke="#5e6770" strokeWidth="2" /></svg>
            <ScrollThumb />
            <svg width="10" height="7" viewBox="0 0 10 7"><path d="M1 1 L5 5 L9 1" fill="none" stroke="#5e6770" strokeWidth="2" /></svg>
          </ScrollTrack>
        </Workspace>
      </Body>
    </Page>
  );
}

export default App;

const GlobalStyle = createGlobalStyle`
  * { box-sizing: border-box; }
  body {
    margin: 0;
    background: #021626;
    color: #28323f;
    font: 14px/20px Inter, "Open Sans", sans-serif;
    font-feature-settings: "cv11", "cv05", "ss01", "tnum";
  }
  button, input { font-family: inherit; font-feature-settings: inherit; margin: 0; }
  button { border: 0; background: none; padding: 0; cursor: pointer; }
  a { text-decoration: none; }
  svg { display: block; flex: none; }
`;

const Page = styled.div`
  display: flex;
  flex-direction: column;
  height: 100vh;
  overflow: hidden;
`;

const TopBar = styled.header`
  display: flex;
  align-items: center;
  flex: none;
  height: 64px;
  border-bottom: 1px solid #0c2334;
`;

const BarButton = styled.button`
  margin-left: 24px;
`;

const Logo = styled.a`
  margin-left: 24px;
  margin-right: auto;
`;

const SearchButton = styled.button`
  display: flex;
  align-items: center;
  justify-content: center;
  width: 46px;
  height: 46px;
  margin-right: 14px;
  border-radius: 4px;
  background: linear-gradient(#526274, #565876);
`;

const BarTool = styled.button`
  display: flex;
  justify-content: center;
  width: 64px;
`;

const Avatar = styled.span`
  width: 40px;
  height: 40px;
  border-radius: 50%;
  background: #ffeb3b;
  color: #ffffff;
  font-size: 23px;
  font-weight: 800;
  line-height: 40px;
`;

const Body = styled.div`
  display: flex;
  flex: 1;
  min-height: 0;
`;

const Sidebar = styled.nav`
  display: flex;
  flex-direction: column;
  flex: none;
  width: 208px;
  padding-top: 1px;
  border-right: 2px solid #0c2334;
`;

const MenuLink = styled.a`
  display: flex;
  align-items: center;
  gap: 17px;
  height: 62px;
  padding-left: 21px;
  font-size: 16px;
  color: ${(p) => (p.$active ? '#6e8fdd' : '#84909e')};
  background: ${(p) => (p.$active ? '#0f2239' : 'transparent')};
`;

const SettingsLink = styled(MenuLink)`
  margin-top: auto;
`;

const Workspace = styled.main`
  display: flex;
  flex: 1;
  min-width: 0;
  background: linear-gradient(#021626 12px, #f5f7fb 12px);
`;

const SubNav = styled.nav`
  flex: none;
  width: 200px;
  margin-top: 12px;
  background: #dfe2e6;
  overflow: hidden;
`;

const SubLink = styled.a`
  display: block;
  height: 75px;
  padding-left: 28px;
  line-height: 73px;
  color: ${(p) => (p.$active ? '#4a5866' : '#73828f')};
  background: ${(p) => (p.$active ? '#f5f7fb' : 'transparent')};
  box-shadow: ${(p) => (p.$active ? '0 4px 10px #c5cacd' : 'none')};
`;

const Content = styled.div`
  display: grid;
  grid-template-columns: minmax(0, 17fr) minmax(0, 12fr);
  align-items: start;
  gap: 28px;
  flex: 1;
  min-width: 0;
  margin-top: 12px;
  padding: 28px 122px 0 120px;
  overflow: hidden;
`;

const Column = styled.div`
  display: flex;
  flex-direction: column;
  gap: 30px;
`;

const Title = styled.h2`
  margin: 0 0 8px;
  font-size: 16px;
  font-weight: 400;
  line-height: 20px;
`;

const Card = styled.div`
  border-radius: 4px;
  background: #ffffff;
  box-shadow: 0 1px 3px #d9dce1;
`;

const Balance = styled.div`
  padding: 18px 15px 17px;
  border-bottom: 2px solid #ebebeb;
  font-size: 42px;
  line-height: 56px;
  font-feature-settings: "zero", "tnum";
`;

const Totals = styled.div`
  display: grid;
  grid-template-columns: 1fr 1fr;
  column-gap: 28px;
  padding: 12px 0 15px;
  border-radius: 0 0 4px 4px;
  background: #f5f5f5;
`;

const Total = styled.div`
  text-align: center;
`;

const Caption = styled.div`
  color: #7d858e;
  font-size: 11px;
  line-height: 14px;
`;

const TotalValue = styled.div`
  margin-top: 5px;
  font-size: 20px;
  line-height: 26px;
  font-feature-settings: "zero", "tnum";
`;

const ServiceCard = styled(Card)`
  padding: 14px 9px 8px 15px;
`;

const ServiceHead = styled.div`
  display: flex;
  align-items: flex-end;
  gap: 14px;
  margin-bottom: 21px;
`;

const ServiceName = styled.div`
  display: flex;
  align-items: center;
  gap: 5px;
  line-height: 24px;
`;

const Badge = styled.span`
  padding: 0 3px;
  border: 1px solid ${(p) => (p.$tone === 'blue' ? '#c3d9e5' : '#e6e6e6')};
  border-radius: 5px;
  background: ${(p) => (p.$tone === 'blue' ? '#d5e7f0' : '#f1f1f1')};
  color: ${(p) => (p.$link ? '#1b6390' : '#2f3b48')};
  font-size: 12px;
  line-height: 16px;
`;

const Speeds = styled.div`
  display: flex;
  border: 1px solid #f0f0f2;
  border-radius: 15px;
  padding: 0 4px;
`;

const Speed = styled.span`
  display: flex;
  align-items: center;
  gap: 4px;
  padding: 0 5px 0 10px;
  font-weight: 500;
  line-height: 27px;

  & + & {
    border-left: 1px dotted #e3e5e8;
  }
`;

const Fields = styled.div`
  display: grid;
  grid-template-columns: 1fr 1fr;
  row-gap: 12px;
  padding-left: 7px;
`;

const Field = styled.div`
  display: flex;
  flex-direction: column;
  gap: 1px;
  grid-column: ${(p) => (p.$wide ? 'span 2' : 'auto')};
`;

const ServiceLine = styled.div`
  display: flex;
  align-items: center;
  gap: 4px;
`;

const TextLink = styled.a`
  color: #1b6390;
`;

const ServiceId = styled.div`
  color: #7d858e;
  font-size: 11px;
  line-height: 12px;
  text-align: right;
`;

const LocationBody = styled.div`
  padding: 14px 15px 15px;
`;

const LocationHead = styled.div`
  display: flex;
  justify-content: space-between;
  align-items: flex-start;
  height: 34px;
`;

const MapDrawing = styled.svg`
  width: 100%;
  height: 251px;
  border-radius: 4px;
  font-family: Roboto, sans-serif;
`;

const Address = styled.address`
  display: flex;
  flex-direction: column;
  align-items: flex-start;
  padding: 14px 14px 13px;
  border: 1px solid #f2f4f4;
  border-top: 0;
  border-radius: 0 0 4px 4px;
  background: #fcfdfd;
  font-size: 12px;
  font-style: normal;
  font-weight: 500;
  line-height: 14px;
`;

const Coords = styled.a`
  margin: 5px 0 3px;
  border-bottom: 1px solid #9fadbd;
  color: #95a3b5;
`;

const Person = styled.a`
  display: flex;
  align-items: center;
  gap: 4px;
  color: #1b6390;
  line-height: 20px;
`;

const Mailing = styled.div`
  display: flex;
  flex-direction: column;
  align-items: center;
  gap: 14px;
  padding: 26px 0 14px;
  border-top: 1px solid #e8e8e8;
  border-radius: 0 0 4px 4px;
  background: #f5f5f5;
`;

const GreyButton = styled.button`
  height: 28px;
  padding: 0 14px;
  border-radius: 3px;
  background: #f0f0f2;
  color: #4c5b6a;
  font-size: 13px;
  font-weight: 700;
  font-feature-settings: normal;
`;

const CreateButton = styled(GreyButton)`
  background: #2db3ff;
  color: #ffffff;
`;

const Split = styled.div`
  position: relative;
  display: flex;
`;

const SplitMain = styled(GreyButton)`
  border-radius: 3px 0 0 3px;
`;

const SplitCaret = styled.button`
  display: flex;
  align-items: center;
  justify-content: center;
  width: 30px;
  border-left: 1px solid #e2e3e6;
  border-radius: 0 3px 3px 0;
  background: #f0f0f2;
`;

const ContactCard = styled(Card)`
  padding: 15px 15px 40px;
`;

const ContactHead = styled.div`
  display: flex;
  justify-content: space-between;
  align-items: flex-start;
  height: 35px;
  margin-bottom: 11px;
`;

const ContactName = styled.div`
  display: flex;
  align-self: flex-end;
  align-items: center;
  gap: 5px;
  line-height: 24px;
`;

const Role = styled.span`
  color: #6f9ab8;
`;

const ContactLine = styled.div`
  display: flex;
  align-items: center;
  gap: 5px;
  padding-left: 2px;
`;

const Mobile = styled(Caption)`
  margin-top: 6px;
  padding-left: 7px;
`;

const DetailCard = styled(Card)`
  padding: 12px 15px;
`;

const DetailRow = styled.dl`
  display: flex;
  gap: 5px;
  margin: 0;
  line-height: 27px;

  dt { color: #7d858e; }
  dd { margin: 0; }
`;

const PanelCard = styled(Card)`
  display: flex;
  flex-direction: column;
  padding: 28px 15px 15px;

  & > ${GreyButton} {
    align-self: flex-end;
    margin-right: 13px;
  }
`;

const Empty = styled.p`
  margin: 42px 0 11px;
  color: #7d858e;
  text-align: center;
`;

const Note = styled.div`
  display: flex;
  margin: 42px 0 25px;
  padding-right: 13px;
`;

const NoteIcon = styled.div`
  display: flex;
  align-items: center;
  justify-content: center;
  align-self: center;
  flex: none;
  width: 48px;
  height: 48px;
  border-radius: 50%;
  background: #f3f4f6;
`;

const NoteBody = styled.div`
  flex: 1;
  padding-left: 16px;
`;

const NoteHead = styled.div`
  display: flex;
  align-items: center;
  justify-content: space-between;
`;

const NoteAuthor = styled.div`
  display: flex;
  align-items: center;
  gap: 2px;
`;

const SmallAvatar = styled.span`
  width: 16px;
  height: 16px;
  border-radius: 50%;
  background: #ff5722;
  color: #ffffff;
  font-size: 10px;
  font-weight: 700;
  line-height: 16px;
  text-align: center;
`;

const NoteTime = styled.div`
  color: #7d858e;
  font-size: 11px;
  line-height: 14px;
`;

const NoteText = styled.p`
  margin: 12px 0 0;
`;

const DotsButton = styled.button`
  display: flex;
  justify-content: center;
  width: 32px;
  padding: 5px 0;
`;

const PagerRow = styled.div`
  display: flex;
  align-items: center;
  justify-content: center;
  color: #7d858e;
`;

const PagerButton = styled.button`
  width: 48px;
  color: #868e97;
  font-size: 16px;
  line-height: 20px;
`;

const PageField = styled.div`
  display: flex;
  align-items: center;
  gap: 5px;
  margin: 0 15px;
`;

const PageInput = styled.input`
  width: 100px;
  height: 29px;
  border: 1px solid #e2e4e8;
  border-radius: 3px;
  color: #28323f;
  font-family: "DejaVu Sans", sans-serif;
  font-size: 13px;
  text-align: center;
`;

const Results = styled.div`
  margin-top: 7px;
  padding-right: 8px;
  color: #7d858e;
  font-size: 10px;
  line-height: 14px;
  text-align: center;
`;

const TaskCard = styled(Card)`
  padding: 15px 13px 15px 15px;
`;

const TaskHead = styled.div`
  display: flex;
  justify-content: space-between;
  margin-bottom: 17px;
`;

const Toggle = styled.div`
  display: flex;
  border: 1px solid #dfe3e8;
  border-radius: 3px;
`;

const ToggleButton = styled.button`
  height: 26px;
  padding: 0 ${(p) => (p.$on ? '12px' : '16px')};
  background: ${(p) => (p.$on ? '#c4eaff' : '#ffffff')};
  color: ${(p) => (p.$on ? '#3f5568' : '#8b949d')};
  font-size: 13px;
  font-weight: 500;
`;

const CaretFrame = styled.div`
  position: absolute;
  top: -2px;
  right: -1px;
  width: 30px;
  height: 32px;
  border: 4px solid #ff0000;
  pointer-events: none;
`;

const DropMenu = styled.div`
  position: absolute;
  top: 28px;
  right: 1px;
  z-index: 1;
  padding: 3px 0 4px;
  border-radius: 3px;
  background: #ffffff;
  box-shadow: 0 4px 12px rgba(40, 50, 63, 0.3);
`;

const DropItem = styled.button`
  display: block;
  width: 100%;
  padding: 0 14px;
  color: #5b6672;
  font-size: 14px;
  line-height: 35px;
  text-align: left;
  white-space: nowrap;
`;

const ItemFrame = styled.div`
  position: absolute;
  top: -1px;
  left: -4px;
  right: -5px;
  height: 50px;
  border: 4px solid #ff0000;
  pointer-events: none;
`;

const Arrow = styled.svg`
  position: absolute;
  bottom: 28px;
  right: -89px;
  pointer-events: none;
`;

const TaskRow = styled.div`
  display: flex;
  align-items: center;
  min-height: 54px;
  padding: 15px 15px 15px 18px;
`;

const TaskCheck = styled.input`
  appearance: none;
  flex: none;
  width: 14px;
  height: 14px;
  margin: 0 52px 0 0;
  border: 1px solid #b5bac0;
  border-radius: 3px;
  background: #ffffff;
`;

const TaskBody = styled.div`
  flex: 1;
`;

const TaskMeta = styled.div`
  display: flex;
  gap: 40px;
  margin-top: 6px;
  color: #7d858e;
  font-size: 10px;
  line-height: 20px;

  a { font-weight: 500; }
`;

const Due = styled.span`
  display: inline-block;
  padding: 0 4px;
  border-radius: 4px;
  background: #ffe6ec;
  color: #f0346a;
  font-weight: 500;
`;

const TaskPager = styled.div`
  margin-top: 12px;
`;

const LogCard = styled(Card)`
  display: grid;
  grid-template-columns: 1fr 1fr;
  padding-bottom: 60px;
`;

const LogTab = styled.button`
  height: 50px;
  border-bottom: 3px solid ${(p) => (p.$on ? '#2db8fa' : '#f0f0f2')};
  background: ${(p) => (p.$on ? '#d4f1ff' : '#ffffff')};
  color: ${(p) => (p.$on ? '#3b4856' : '#7d858e')};
  font-size: 14px;
  font-weight: ${(p) => (p.$on ? 600 : 400)};
`;

const ScrollTrack = styled.div`
  display: flex;
  flex-direction: column;
  align-items: center;
  flex: none;
  width: 17px;
  padding: 7px 0;
  background: #06141f;
`;

const ScrollThumb = styled.div`
  width: 15px;
  height: 62%;
  margin: 136px 0 auto;
  background: #69727a;
`;
